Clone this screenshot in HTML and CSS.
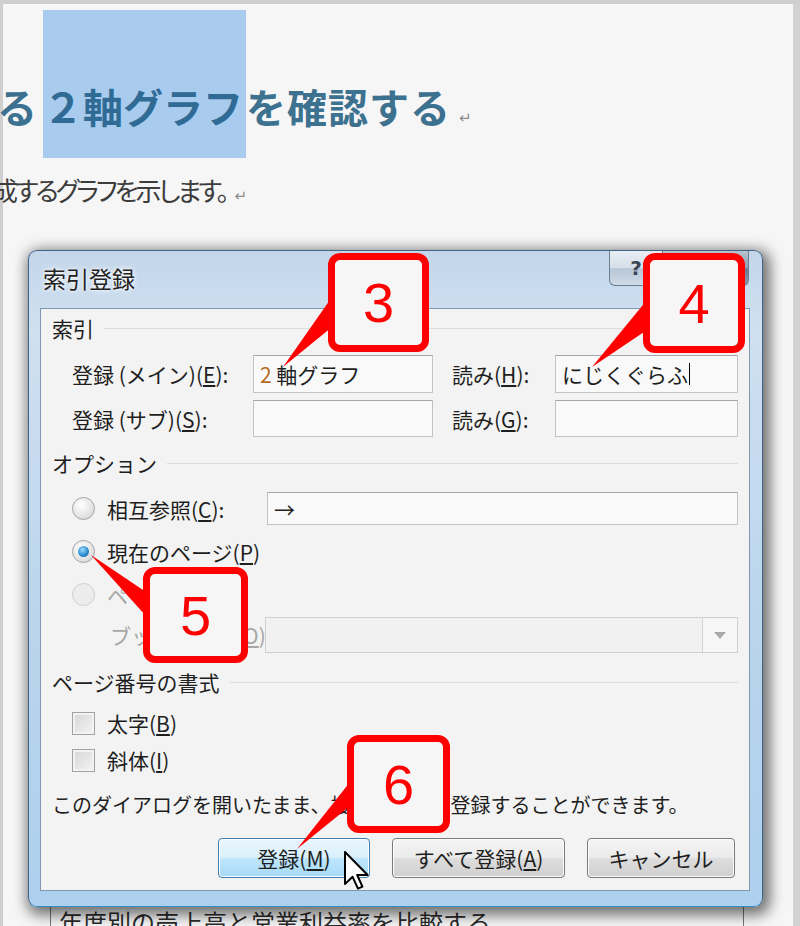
FILE: index.html
```html
<!DOCTYPE html>
<html lang="ja">
<head>
    <meta charset="UTF-8">
    <meta name="viewport" content="width=device-width, initial-scale=1.0">
    <title>索引登録</title>
    <link rel="stylesheet" href="styles.css">
</head>
<body>
<div class="page">
    <div class="doc">
        <h1 class="heading">る<span class="sel">２軸グラフ</span>を確認する<span class="mark">↵</span></h1>
        <p class="lead">成するグラフを示します。<span class="mark">↵</span></p>
        <p class="table-row">年度別の売上高と営業利益率を比較する</p>
    </div>

    <!-- 索引登録ダイアログ -->
    <div class="dialog">
        <div class="titlebar">
            <span class="title">索引登録</span>
            <div class="caption-buttons">
                <span class="cap-btn help">?</span>
                <span class="cap-btn close">✕</span>
            </div>
        </div>
        <div class="panel">
            <div class="group-head">索引</div>
            <div class="entry-grid">
                <span>登録 (メイン)(<u>E</u>):</span>
                <div class="textbox"><span class="ime">2</span>&nbsp;軸グラフ</div>
                <span class="yomi">読み(<u>H</u>):</span>
                <div class="textbox">にじくぐらふ<span class="caret"></span></div>
                <span>登録 (サブ)(<u>S</u>):</span>
                <div class="textbox"></div>
                <span class="yomi">読み(<u>G</u>):</span>
                <div class="textbox"></div>
            </div>

            <div class="group-head">オプション</div>
            <div class="options">
                <div class="opt-row">
                    <span class="radio"></span>
                    <span class="opt-label">相互参照(<u>C</u>):</span>
                    <div class="textbox">→</div>
                </div>
                <div class="opt-row">
                    <span class="radio checked"></span>
                    <span class="opt-label">現在のページ(<u>P</u>)</span>
                </div>
                <div class="opt-row disabled">
                    <span class="radio"></span>
                    <span class="opt-label">ページ範囲(<u>N</u>)</span>
                </div>
                <div class="opt-row disabled bookmark">
                    <span class="opt-label">ブックマーク(<u>O</u>):</span>
                    <div class="combo"><span class="combo-arrow"></span></div>
                </div>
            </div>

            <div class="group-head">ページ番号の書式</div>
            <div class="checks">
                <div class="check-row"><span class="checkbox"></span><span>太字(<u>B</u>)</span></div>
                <div class="check-row"><span class="checkbox"></span><span>斜体(<u>I</u>)</span></div>
            </div>

            <p class="info">このダイアログを開いたまま、複数の索引を登録することができます。</p>

            <div class="buttons">
                <button class="btn hot">登録(<u>M</u>)</button>
                <button class="btn all">すべて登録(<u>A</u>)</button>
                <button class="btn cancel">キャンセル</button>
            </div>
        </div>
    </div>

    <!-- 吹き出し -->
    <svg class="tails" width="800" height="926" viewBox="0 0 800 926">
        <polygon points="332,297 332,327 283,367" />
        <polygon points="647,300 647,330 592,367" />
        <polygon points="146,592 146,616 91,555" />
        <polygon points="350,782 350,806 297,849" />
    </svg>
    <div class="callout c3">3</div>
    <div class="callout c4">4</div>
    <div class="callout c5">5</div>
    <div class="callout c6">6</div>

    <svg class="cursor" width="26" height="40" viewBox="0 0 13 20">
        <path d="M0.5 0.5 L0.5 16.5 L4.3 12.9 L7 18.8 L9.2 17.8 L6.6 12 L11.8 12 Z" />
    </svg>
</div>
</body>
</html>
```

FILE: styles.css
```css
body {
    margin: 0;
    background: #f6f6f6;
}

.page {
    position: relative;
    width: 800px;
    height: 926px;
    overflow: hidden;
    background: #f6f6f6;
    box-shadow: inset 3px 4px 0 #cfcfcf, inset -7px 0 0 #d2d2d2;
    font-family: "Noto Sans CJK JP", "Noto Sans", sans-serif;
    color: #1e1e1e;
}

/* 背景の文書 */
.heading {
    margin: 10px 0 0 -3px;
    font-size: 40px;
    line-height: 40px;
    font-weight: 700;
    letter-spacing: 1px;
    color: #3d7190;
    white-space: nowrap;
}

.sel {
    display: inline-block;
    margin-left: 5px;
    padding: 76px 3px 32px 0;
    background: #a9cbee;
    color: #2f6b95;
    letter-spacing: 0;
}

.mark {
    margin-left: 8px;
    font-family: "DejaVu Sans", sans-serif;
    font-size: 15px;
    font-weight: 400;
    letter-spacing: 0;
    color: #8c8c8c;
}

.lead {
    margin: 15px 0 0 -8px;
    font-size: 26px;
    line-height: 34px;
    letter-spacing: -3px;
    font-feature-settings: "palt";
    color: #3c3c3c;
    white-space: nowrap;
}

.table-row {
    margin: 694px 0 0 50px;
    width: 676px;
    padding: 0 8px;
    border-left: 1px solid #777;
    border-right: 1px solid #777;
    font-size: 24px;
    line-height: 30px;
    color: #2a2a2a;
}

/* ダイアログ */
.dialog {
    position: absolute;
    left: 28px;
    top: 250px;
    width: 735px;
    height: 657px;
    box-sizing: border-box;
    display: flex;
    flex-direction: column;
    padding: 0 12px 15px 11px;
    border: 1px solid #3f6487;
    border-bottom-color: #3a8cc4;
    border-radius: 9px;
    background: linear-gradient(#c3d6ea, #cfe0f1 12%, #b9d4ec 60%, #add0ee);
    box-shadow: 3px 4px 14px 4px rgba(0, 0, 0, .55);
}

.titlebar {
    height: 57px;
    display: flex;
    justify-content: space-between;
    align-items: flex-start;
}

.title {
    margin: 12px 0 0 3px;
    font-size: 23px;
    line-height: 30px;
    color: #222;
    text-shadow: 0 0 6px #fff, 0 0 3px #fff;
}

.caption-buttons {
    display: flex;
    margin-right: 1px;
}

.cap-btn {
    height: 34px;
    display: flex;
    align-items: center;
    justify-content: center;
    border: 1px solid #6c7e92;
    border-top: none;
    color: #3d4754;
    font-family: "DejaVu Sans", sans-serif;
    font-weight: 700;
}

.help {
    width: 52px;
    border-radius: 0 0 0 6px;
    font-size: 20px;
    background: linear-gradient(#e9eef4, #d5dee8 50%, #b7c6d6 52%, #cfdbe7);
}

.close {
    width: 85px;
    border-left: none;
    border-radius: 0 0 6px 0;
    font-size: 18px;
    background: linear-gradient(#b7c3cf, #8f9eae 50%, #6b7b8c 52%, #8d9bab);
    color: #fff;
}

.panel {
    flex: 1;
    box-sizing: border-box;
    padding: 9px 11px 0;
    border: 1px solid #7f99b3;
    background: #f3f3f3;
    font-size: 21px;
    line-height: 26px;
}

.group-head {
    display: flex;
    align-items: center;
    height: 20px;
    line-height: 20px;
    white-space: nowrap;
}

.group-head::after {
    content: "";
    flex: 1;
    margin-left: 10px;
    border-top: 1px solid #dadde0;
}

.entry-grid {
    display: grid;
    grid-template-columns: 181px 180px 122px 183px;
    grid-template-rows: 38px 37px;
    row-gap: 7px;
    align-items: center;
    margin: 17px 0 16px 20px;
    white-space: nowrap;
}

.yomi {
    padding-left: 19px;
}

.textbox {
    height: 100%;
    box-sizing: border-box;
    display: flex;
    align-items: center;
    padding: 0 6px;
    border: 1px solid #c0c3c8;
    border-top-color: #a3a7ad;
    background: #f9f9f9;
    white-space: nowrap;
}

.ime {
    color: #b36a1f;
}

.caret {
    width: 1px;
    height: 22px;
    margin-left: 1px;
    background: #000;
}

.options {
    display: flex;
    flex-direction: column;
    gap: 10px;
    margin: 19px 0 19px 20px;
}

.opt-row {
    display: flex;
    align-items: center;
    gap: 12px;
    height: 33px;
}

.opt-row .textbox {
    flex: 1;
}

.opt-label {
    width: 148px;
    white-space: nowrap;
}

.radio {
    width: 23px;
    height: 23px;
    box-sizing: border-box;
    border: 1px solid #a2a4a6;
    border-radius: 50%;
    background: radial-gradient(circle at 40% 35%, #ffffff, #e4e4e4 60%, #c9c9c9);
    display: flex;
    align-items: center;
    justify-content: center;
}

.radio.checked::after {
    content: "";
    width: 11px;
    height: 11px;
    border-radius: 50%;
    background: radial-gradient(circle at 40% 35%, #9fdcff, #2f8ed0 55%, #135e98);
}

.disabled {
    color: #a6a6a6;
}

.disabled .radio {
    border-color: #cfcfcf;
    background: #ececec;
}

.bookmark {
    height: 36px;
    margin-top: -4px;
    padding-left: 38px;
}

.bookmark .opt-label {
    width: 143px;
}

.combo {
    flex: 1;
    height: 100%;
    box-sizing: border-box;
    display: flex;
    justify-content: flex-end;
    border: 1px solid #cfcfcf;
    background: #f1f1f1;
}

.combo-arrow {
    width: 34px;
    border-left: 1px solid #d4d4d4;
    background: #f6f6f6;
    display: flex;
    align-items: center;
    justify-content: center;
}

.combo-arrow::after {
    content: "";
    border-left: 6px solid transparent;
    border-right: 6px solid transparent;
    border-top: 7px solid #a9a9a9;
}

.checks {
    display: flex;
    flex-direction: column;
    gap: 7px;
    margin: 16px 0 0 20px;
}

.check-row {
    display: flex;
    align-items: center;
    gap: 12px;
    height: 30px;
}

.checkbox {
    width: 23px;
    height: 23px;
    box-sizing: border-box;
    border: 1px solid #a0a2a4;
    background: linear-gradient(135deg, #d6d6d6, #f4f4f4);
    box-shadow: inset 0 0 0 2px #f2f2f2;
}

.info {
    margin: 17px 0 0;
    font-size: 20px;
    white-space: nowrap;
}

.buttons {
    display: flex;
    justify-content: flex-end;
    gap: 22px;
    margin: 20px 3px 0 0;
}

.btn {
    height: 40px;
    padding: 0;
    border: 1px solid #7a7a7a;
    border-radius: 4px;
    background: linear-gradient(#f4f4f4, #ebebeb 48%, #dddddd 52%, #d0d0d0);
    box-shadow: inset 0 0 0 1px #fcfcfc;
    font-family: inherit;
    font-size: 21px;
    color: #1e1e1e;
}

.btn.hot {
    width: 152px;
    border-color: #3c7fb1;
    background: linear-gradient(#eaf6fd, #d9f0fc 48%, #bee6fd 52%, #a7d9f5);
}

.btn.all {
    width: 173px;
}

.btn.cancel {
    width: 148px;
}

/* 吹き出し */
.tails {
    position: absolute;
    left: 0;
    top: 0;
}

.tails polygon {
    fill: #ff0000;
}

.callout {
    position: absolute;
    box-sizing: border-box;
    display: flex;
    align-items: center;
    justify-content: center;
    border: 7px solid #ff0000;
    border-radius: 12px;
    background: #f6f6f6;
    font-family: "Liberation Sans", sans-serif;
    font-size: 56px;
    color: #ff0000;
}

.c3 {
    left: 328px;
    top: 253px;
    width: 101px;
    height: 99px;
}

.c4 {
    left: 643px;
    top: 253px;
    width: 102px;
    height: 100px;
}

.c5 {
    left: 143px;
    top: 567px;
    width: 105px;
    height: 96px;
}

.c6 {
    left: 347px;
    top: 735px;
    width: 103px;
    height: 98px;
}

.cursor {
    position: absolute;
    left: 344px;
    top: 851px;
}

.cursor path {
    fill: #fff;
    stroke: #000;
    stroke-width: 1;
    stroke-linejoin: round;
}
```
